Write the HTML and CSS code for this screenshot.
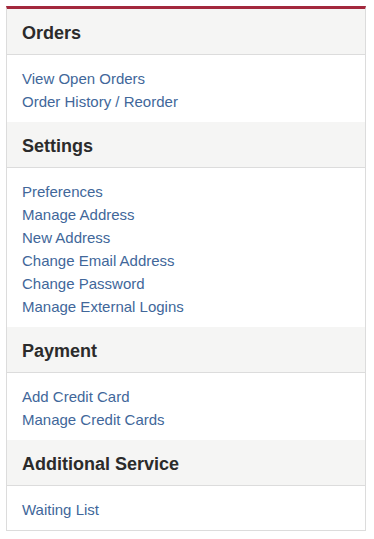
FILE: index.html
```html
<!DOCTYPE html>
<html lang="en">
<head>
    <meta charset="UTF-8">
    <meta name="viewport" content="width=device-width, initial-scale=1.0">
    <title>My Account</title>
    <link rel="stylesheet" href="styles.css">
</head>
<body>
    <div class="account-menu">
        <div class="menu-heading">Orders</div>
        <div class="menu-links">
            <a href="#">View Open Orders</a>
            <a href="#">Order History / Reorder</a>
        </div>

        <div class="menu-heading">Settings</div>
        <div class="menu-links">
            <a href="#">Preferences</a>
            <a href="#">Manage Address</a>
            <a href="#">New Address</a>
            <a href="#">Change Email Address</a>
            <a href="#">Change Password</a>
            <a href="#">Manage External Logins</a>
        </div>

        <div class="menu-heading">Payment</div>
        <div class="menu-links">
            <a href="#">Add Credit Card</a>
            <a href="#">Manage Credit Cards</a>
        </div>

        <div class="menu-heading">Additional Service</div>
        <div class="menu-links">
            <a href="#">Waiting List</a>
        </div>
    </div>
</body>
</html>
```

FILE: styles.css
```css
body {
    margin: 0;
    background: #ffffff;
    font-family: "Liberation Sans", Arial, sans-serif;
}

.account-menu {
    margin: 6px 8px 0 6px;
    border: 1px solid #dcdcdc;
    border-top: 3px solid #a3283d;
    display: flex;
    flex-direction: column;
}

.menu-heading {
    background-color: #f5f5f4;
    border-bottom: 1px solid #dcdcdc;
    color: #2b2b2b;
    font-size: 18px;
    font-weight: bold;
    line-height: 22px;
    padding: 13px 15px 10px;
}

.menu-links {
    display: flex;
    flex-direction: column;
    padding: 12px 15px 9px;
}

.menu-links a {
    color: #41679a;
    font-size: 15px;
    line-height: 23px;
    text-decoration: none;
}
```
